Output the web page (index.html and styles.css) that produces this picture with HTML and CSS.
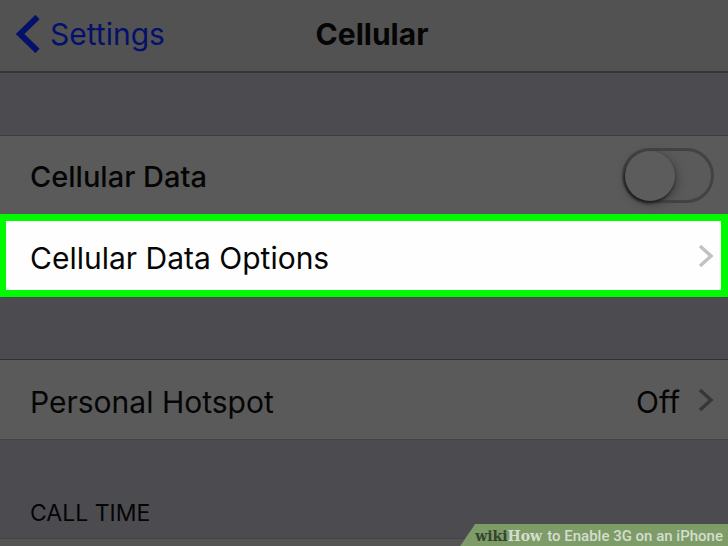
FILE: index.html
```html
<!DOCTYPE html>
<html lang="en">
<head>
    <meta charset="UTF-8">
    <meta name="viewport" content="width=device-width, initial-scale=1.0">
    <title>Cellular</title>
    <link rel="stylesheet" href="styles.css">
</head>
<body>
    <header class="navbar">
        <a class="back" href="#">
            <svg class="back-icon" width="24" height="38" viewBox="0 0 24 38" aria-hidden="true">
                <path d="M21.5 2 L4 19 L21.5 36"/>
            </svg>
            <span>Settings</span>
        </a>
        <h1>Cellular</h1>
    </header>

    <main>
        <div class="row toggle-row">
            <label for="cellularData">Cellular Data</label>
            <input class="switch" type="checkbox" role="switch" id="cellularData">
        </div>
        <a class="row highlight" href="#">
            <span class="label">Cellular Data Options</span>
            <svg class="chevron" width="16" height="24" viewBox="0 0 16 24" aria-hidden="true">
                <path d="M2 2 L13 12 L2 22"/>
            </svg>
        </a>
        <a class="row hotspot" href="#">
            <span class="label">Personal Hotspot</span>
            <span class="value">Off</span>
            <svg class="chevron" width="16" height="24" viewBox="0 0 16 24" aria-hidden="true">
                <path d="M2 2 L13 12 L2 22"/>
            </svg>
        </a>
        <h2>CALL TIME</h2>
        <div class="next-row"></div>
    </main>

    <div class="watermark"><span class="wiki">wiki</span><span class="how">How</span><span class="caption">to Enable 3G on an iPhone</span></div>
</body>
</html>
```
FILE: styles.css
```css
* {
    box-sizing: border-box;
}
body {
    margin: 0;
    min-height: 100vh;
    display: flex;
    flex-direction: column;
    background-color: #4c4b50;
    color: #050505;
    font-family: Inter, "Liberation Sans", sans-serif;
    font-size: 30px;
    line-height: 36px;
    overflow: hidden;
}
a {
    color: inherit;
    text-decoration: none;
}
.navbar {
    display: grid;
    grid-template-columns: 1fr auto 1fr;
    align-items: center;
    height: 73px;
    padding: 0 0 4px 16px;
    background-color: #525253;
    border-bottom: 2px solid #353539;
}
.back {
    display: flex;
    align-items: center;
    gap: 10px;
    color: #04116b;
}
.back-icon,
.chevron {
    flex: none;
    fill: none;
    stroke: currentColor;
    stroke-width: 6;
}
.chevron {
    stroke-width: 3.5;
    margin: 0 0 3px 18px;
    color: #36363e;
}
h1 {
    margin: 0;
    font-size: 30px;
    font-weight: 700;
}
main {
    flex: 1;
    display: flex;
    flex-direction: column;
    padding-top: 62px;
}
.row {
    display: flex;
    align-items: center;
    padding: 0 14px 0 30px;
    background-color: #5a5a5a;
}
.toggle-row {
    height: 79px;
    padding-top: 4px;
    border-top: 1px solid #3d3d40;
}
.toggle-row label,
.label {
    flex: 1;
}
.toggle-row label {
    font-size: 29px;
    font-weight: 500;
}
.switch {
    appearance: none;
    display: flex;
    width: 92px;
    height: 55px;
    margin: 0 0 4px;
    border: 3px solid #434343;
    border-radius: 28px;
    cursor: pointer;
}
.switch::before {
    content: "";
    width: 50px;
    height: 50px;
    border-radius: 50%;
    background-color: #5c5c5c;
    box-shadow: -1px 2px 3px #1a1a1a, 2px 3px 10px #3d3d3d;
}
.switch:checked::before {
    margin-left: auto;
}
.highlight {
    height: 83px;
    padding: 4px 7px 0 24px;
    border: 7px solid #00fb00;
    border-left-width: 6px;
    background-color: #fefefe;
}
.highlight .chevron {
    color: #c2c2c4;
}
.hotspot {
    height: 81px;
    margin-top: 62px;
    padding-top: 4px;
    border-top: 1px solid #303033;
    border-bottom: 1px solid #424247;
}
h2 {
    margin: 60px 0 12px;
    padding-left: 30px;
    font-size: 23px;
    line-height: 26px;
    font-weight: 400;
}
.next-row {
    flex: 1;
    border-top: 1px solid #424247;
    background-color: #545455;
}
.watermark {
    position: fixed;
    right: 0;
    bottom: 0;
    display: flex;
    align-items: center;
    height: 22px;
    padding: 2px 5px 0 15px;
    background-color: #7d9c68;
    clip-path: polygon(15px 0, 100% 0, 100% 100%, 0 100%);
    color: #d5ddce;
    font: 500 15px Roboto, "Liberation Sans", sans-serif;
}
.wiki,
.how {
    font-family: "DejaVu Serif", serif;
    font-size: 14px;
    font-weight: bold;
}
.wiki {
    color: #35442e;
}
.caption {
    margin-left: 5px;
}
```
